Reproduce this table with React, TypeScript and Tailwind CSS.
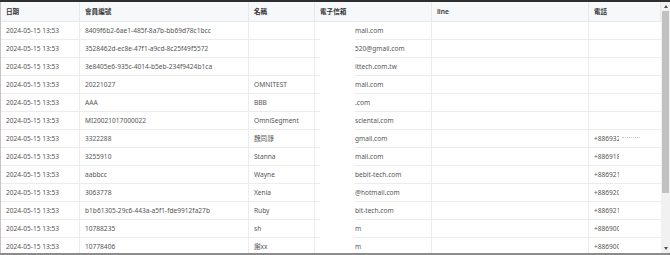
import React from 'react';

interface Member {
  date: string;
  id: string;
  name: string;
  email: string;
  line: string;
  phone: string;
}

const members: Member[] = [
  { date: '2024-05-15 13:53', id: '8409f6b2-6ae1-485f-8a7b-bb69d78c1bcc', name: '', email: 'mail.com', line: '', phone: '' },
  { date: '2024-05-15 13:53', id: '3528462d-ec8e-47f1-a9cd-8c25f49f5572', name: '', email: '520@gmail.com', line: '', phone: '' },
  { date: '2024-05-15 13:53', id: '3e8405e6-935c-4014-b5eb-234f9424b1ca', name: '', email: 'ittech.com.tw', line: '', phone: '' },
  { date: '2024-05-15 13:53', id: '20221027', name: 'OMNITEST', email: 'mail.com', line: '', phone: '' },
  { date: '2024-05-15 13:53', id: 'AAA', name: 'BBB', email: '.com', line: '', phone: '' },
  { date: '2024-05-15 13:53', id: 'MI20021017000022', name: 'OmniSegment', email: 'scientai.com', line: '', phone: '' },
  { date: '2024-05-15 13:53', id: '3322288', name: '魏同靜', email: 'gmail.com', line: '', phone: '+8869321' },
  { date: '2024-05-15 13:53', id: '3255910', name: 'Stanna', email: 'mail.com', line: '', phone: '+8869181' },
  { date: '2024-05-15 13:53', id: 'aabbcc', name: 'Wayne', email: 'bebit-tech.com', line: '', phone: '+8869211' },
  { date: '2024-05-15 13:53', id: '3063778', name: 'Xenia', email: '@hotmail.com', line: '', phone: '+8869200' },
  { date: '2024-05-15 13:53', id: 'b1b61305-29c6-443a-a5f1-fde9912fa27b', name: 'Ruby', email: 'bit-tech.com', line: '', phone: '+8869211' },
  { date: '2024-05-15 13:53', id: '10788235', name: 'sh', email: 'm', line: '', phone: '+8869000' },
  { date: '2024-05-15 13:53', id: '10778406', name: '謝xx', email: 'm', line: '', phone: '+8869000' },
];

const headers = ['日期', '會員編號', '名稱', '電子信箱', 'line', '電話'];

const Scrollbar: React.FC = () => (
  <div className="w-[9px] bg-[#f1f1f1] flex flex-col items-center">
    <div className="h-[9px] flex items-center justify-center">
      <div className="w-0 h-0 border-l-[2.5px] border-r-[2.5px] border-b-[3px] border-l-transparent border-r-transparent border-b-[#505050]" />
    </div>
    <div className="w-[7px] h-[182px] bg-[#c1c1c1]" />
    <div className="mt-auto h-[9px] flex items-center justify-center">
      <div className="w-0 h-0 border-l-[2.5px] border-r-[2.5px] border-t-[3px] border-l-transparent border-r-transparent border-t-[#505050]" />
    </div>
  </div>
);

export default function App() {
  return (
    <div className="w-[670px] h-[255px] bg-white flex border-t-2 border-b-2 border-t-[#2e2e2e] border-b-[#8c8c8c] overflow-hidden font-['Noto_Sans','Noto_Sans_CJK_TC',sans-serif]">
      <div className="relative flex-1 border-l border-[#c4c4c4] overflow-hidden">
        <div className="grid grid-cols-[79px_169px_66px_117px_157px_1fr] text-[6.6px] leading-none">
          {headers.map((h) => (
            <div
              key={h}
              className="h-[20px] px-[5px] pt-[1px] flex items-center bg-[#f7f8fa] border-r border-b border-[#e6e8eb] font-semibold text-[#333]"
            >
              {h}
            </div>
          ))}
          {members.map((m, i) => (
            <React.Fragment key={i}>
              <div className="h-[18px] px-[5px] pt-[2px] flex items-center border-r border-b border-[#ececec] text-[#555] whitespace-nowrap">{m.date}</div>
              <div className="h-[18px] px-[5px] pt-[2px] flex items-center border-r border-b border-[#ececec] text-[#555] whitespace-nowrap">{m.id}</div>
              <div className="h-[18px] px-[5px] pt-[2px] flex items-center border-r border-b border-[#ececec] text-[#555] whitespace-nowrap">{m.name}</div>
              <div className="h-[18px] pl-[40px] pt-[2px] flex items-center border-r border-b border-[#ececec] text-[#555] whitespace-nowrap">{m.email}</div>
              <div className="h-[18px] px-[5px] pt-[2px] flex items-center border-r border-b border-[#ececec] text-[#555]">{m.line}</div>
              <div className="h-[18px] px-[5px] pt-[2px] flex items-center border-b border-[#ececec] text-[#555]">
                <span className="inline-block w-[25px] overflow-hidden whitespace-nowrap">{m.phone}</span>
                {i === 6 && <span className="ml-[3px] -mt-[4px] w-[18px] border-t border-dotted border-[#c8c8c8]" />}
              </div>
            </React.Fragment>
          ))}
        </div>
        {/* redacted part of the email column */}
        <div className="absolute left-[319px] top-[20px] bottom-0 w-[35px] bg-white" />
      </div>
      <Scrollbar />
    </div>
  );
}
